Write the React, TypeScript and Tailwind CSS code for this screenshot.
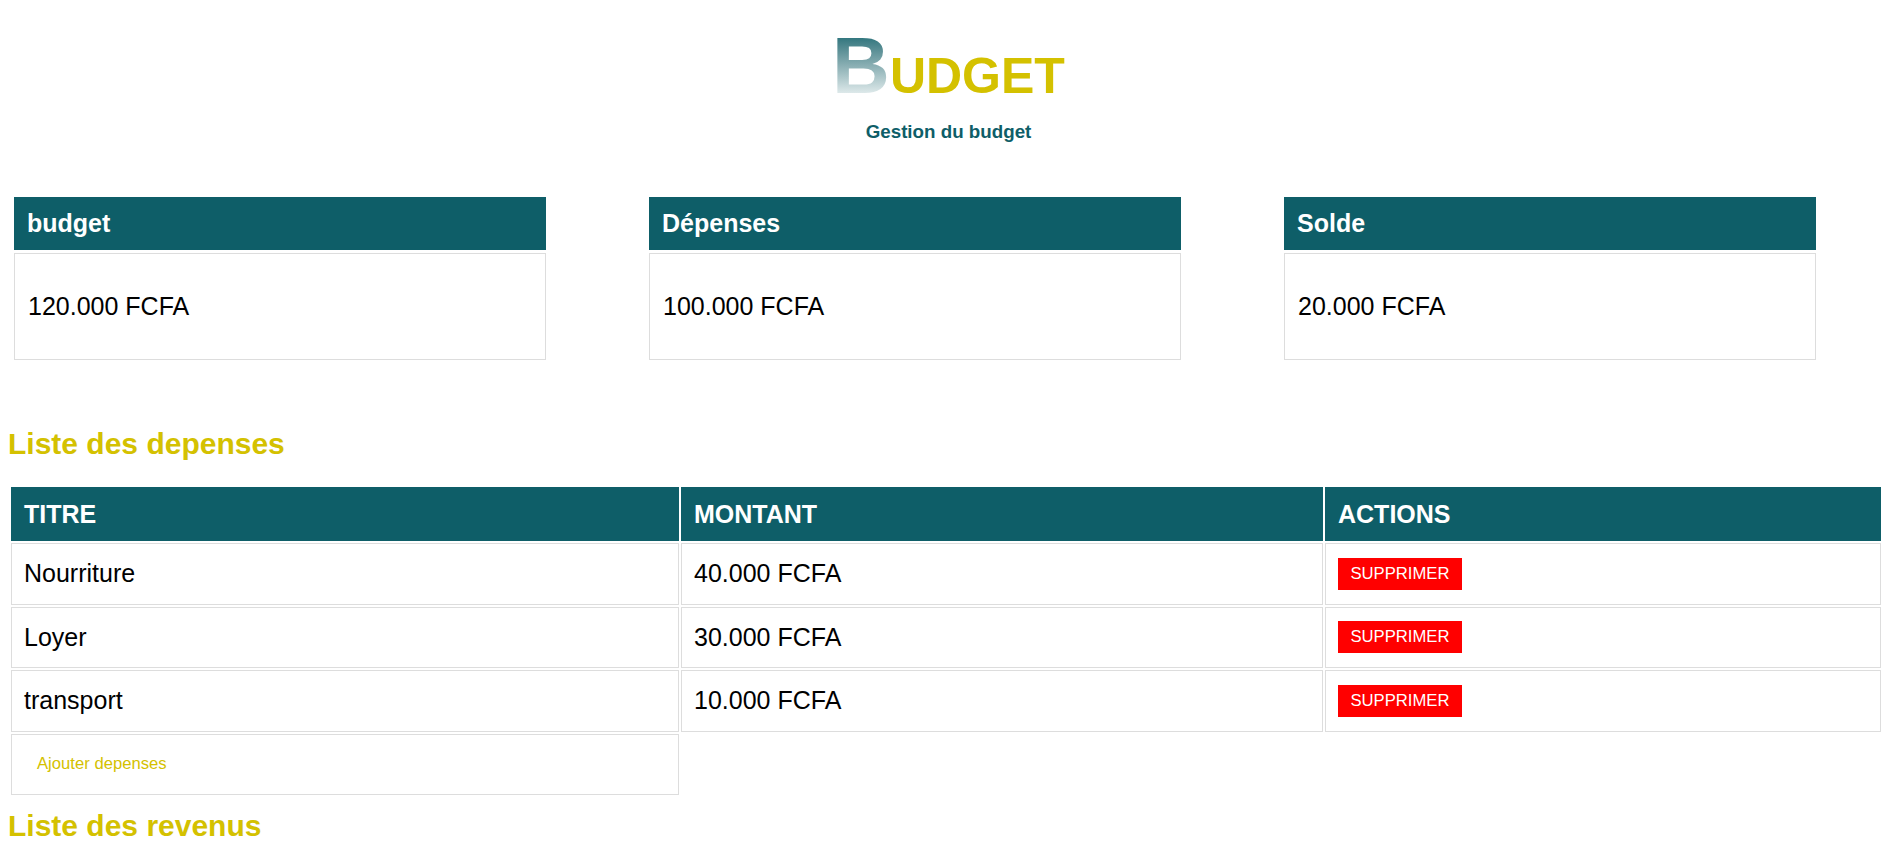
import React from "react";

const rows = [
  { titre: "Nourriture", montant: "40.000 FCFA" },
  { titre: "Loyer", montant: "30.000 FCFA" },
  { titre: "transport", montant: "10.000 FCFA" },
];

const cards = [
  { title: "budget", value: "120.000 FCFA" },
  { title: "Dépenses", value: "100.000 FCFA" },
  { title: "Solde", value: "20.000 FCFA" },
];

export default function App() {
  return (
    <div
      className="h-[851px] w-full overflow-hidden bg-white leading-[normal] text-black"
      style={{ fontFamily: '"Liberation Sans", Arial, sans-serif' }}
    >
      {/* Title */}
      <header className="pt-[20px]">
        <h1 className="flex items-baseline justify-center font-bold leading-[normal]">
          <span className="bg-linear-to-b from-[#347880] from-20% to-[#dfeaeb] to-80% bg-clip-text text-[80px] leading-[normal] text-transparent">
            B
          </span>
          <span className="text-[50px] leading-[normal] text-[#d4c100]">UDGET</span>
        </h1>
        <p className="mt-[9px] text-center text-[18.75px] font-bold leading-[normal] text-[#0e5e68]">
          Gestion du budget
        </p>
      </header>

      {/* Cards */}
      <section className="mt-[54px] flex gap-[103px] pl-[14px]">
        {cards.map((c) => (
          <div key={c.title} className="w-[532px]">
            <div className="flex h-[53px] items-center bg-[#0e5e68] px-[13px] text-[25px] font-bold leading-[normal] text-white">
              {c.title}
            </div>
            <div className="mt-[3px] flex h-[107px] items-center border border-[#dddddd] px-[13px] text-[25px] leading-[normal]">
              {c.value}
            </div>
          </div>
        ))}
      </section>

      {/* Depenses */}
      <h2 className="mt-[67px] pl-[8px] text-[30px] font-bold leading-[normal] text-[#d4c100]">
        Liste des depenses
      </h2>
      <div className="ml-[9px] mt-[24px] grid w-max grid-cols-[668px_642px_556px] gap-[2px] p-[2px]">
        <div className="flex h-[54px] items-center bg-[#0e5e68] px-[13px] text-[25px] font-bold leading-[normal] text-white">
          TITRE
        </div>
        <div className="flex h-[54px] items-center bg-[#0e5e68] px-[13px] text-[25px] font-bold leading-[normal] text-white">
          MONTANT
        </div>
        <div className="flex h-[54px] items-center bg-[#0e5e68] px-[13px] text-[25px] font-bold leading-[normal] text-white">
          ACTIONS
        </div>
        {rows.map((r) => (
          <React.Fragment key={r.titre}>
            <div className="flex h-[61.5px] items-center border border-[#dddddd] px-[12px] text-[25px] leading-[normal]">
              {r.titre}
            </div>
            <div className="flex h-[61.5px] items-center border border-[#dddddd] px-[12px] text-[25px] leading-[normal]">
              {r.montant}
            </div>
            <div className="flex h-[61.5px] items-center border border-[#dddddd] px-[12px]">
              <button className="flex h-[32px] w-[124px] items-center justify-center bg-[#ff0000] text-[16.67px] leading-[normal] text-white">
                SUPPRIMER
              </button>
            </div>
          </React.Fragment>
        ))}
        <div className="flex h-[61.5px] items-center border border-[#dddddd] px-[12px]">
          <button className="px-[13px] text-[16.67px] leading-[normal] text-[#d4c100]">
            Ajouter depenses
          </button>
        </div>
      </div>

      {/* Revenus */}
      <h2 className="mt-[12px] pl-[8px] text-[30px] font-bold leading-[normal] text-[#d4c100]">
        Liste des revenus
      </h2>
    </div>
  );
}
